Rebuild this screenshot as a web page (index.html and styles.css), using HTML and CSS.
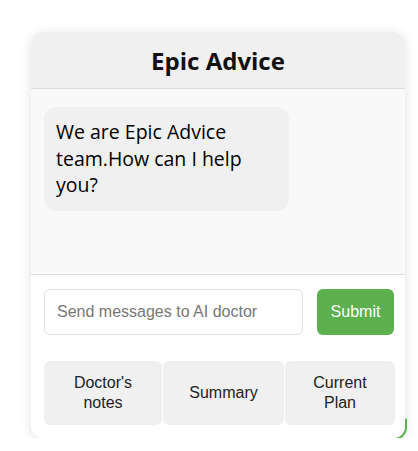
FILE: index.html
```html
<!DOCTYPE html>
<html>
<head>
<meta charset="utf-8">
<link rel="stylesheet" href="styles.css">
</head>
<body>
<div class="card">
  <div class="header">Epic Advice</div>
  <div class="chat">
    <div class="bubble">We are Epic Advice team.How can I help you?</div>
  </div>
  <div class="composer">
    <div class="input-row">
      <input class="input" type="text" placeholder="Send messages to AI doctor">
      <button class="submit">Submit</button>
    </div>
    <div class="actions">
      <button class="action">Doctor's<br>notes</button>
      <button class="action">Summary</button>
      <button class="action">Current<br>Plan</button>
    </div>
  </div>
</div>
</body>
</html>
```
FILE: styles.css
```css
html, body { margin: 0; padding: 0; background: #fff; }
body { padding: 32px 0 0 31px; }
.card {
  position: relative;
  z-index: 0;
  width: 374px;
  border-radius: 12px;
  background: #fff;
  box-shadow: 0 2px 12px rgba(0,0,0,0.12);
  font-family: "Open Sans", "Noto Sans", sans-serif;
}
.card::after {
  content: "";
  position: absolute;
  right: -2px;
  bottom: -2px;
  width: 22px;
  height: 22px;
  border-radius: 0 0 13px 0;
  border-right: 2px solid #5cb04d;
  border-bottom: 2px solid #5cb04d;
  box-sizing: border-box;
  z-index: 1;
  clip-path: polygon(100% 0, 100% 100%, 0 100%, 40% 40%);
}
.header {
  height: 56px;
  display: flex;
  align-items: center;
  justify-content: center;
  background: #f0f0f0;
  border-radius: 12px 12px 0 0;
  border-bottom: 1px solid #ddd;
  font-weight: 700;
  font-size: 24px;
  color: #111;
}
.chat {
  height: 186px;
  box-sizing: border-box;
  padding: 18px 13px;
  background: #f9f9f9;
  border-bottom: 1px solid #ddd;
}
.bubble {
  width: 245px;
  box-sizing: border-box;
  padding: 12px;
  background: #f0f0f0;
  border-radius: 12px;
  font-size: 19.5px;
  line-height: 26.5px;
  color: #000;
}
.composer {
  padding: 14px 11px 13px 13px;
  border-radius: 0 0 12px 12px;
  background: #fff;
}
.input-row {
  display: flex;
  gap: 14px;
  align-items: center;
}
.input {
  width: 259px;
  height: 46px;
  box-sizing: border-box;
  border: 1px solid #ddd;
  border-radius: 6px;
  padding: 0 12px;
  font-family: "Liberation Sans", Arial, sans-serif;
  font-size: 16px;
  color: #333;
  outline: none;
}
.input::placeholder { color: #777; }
.submit {
  width: 77px;
  height: 46px;
  border: none;
  border-radius: 6px;
  background: #5cb04d;
  color: #fff;
  font-family: "Liberation Sans", Arial, sans-serif;
  font-size: 16px;
  padding: 0;
}
.actions {
  display: grid;
  grid-template-columns: 118px 121px 110px;
  gap: 1px;
  margin-top: 26px;
}
.action {
  height: 64px;
  border: none;
  border-radius: 6px;
  background: #f0f0f0;
  color: #222;
  font-family: "Liberation Sans", Arial, sans-serif;
  font-size: 16px;
  line-height: 20px;
  padding: 0;
}
```
